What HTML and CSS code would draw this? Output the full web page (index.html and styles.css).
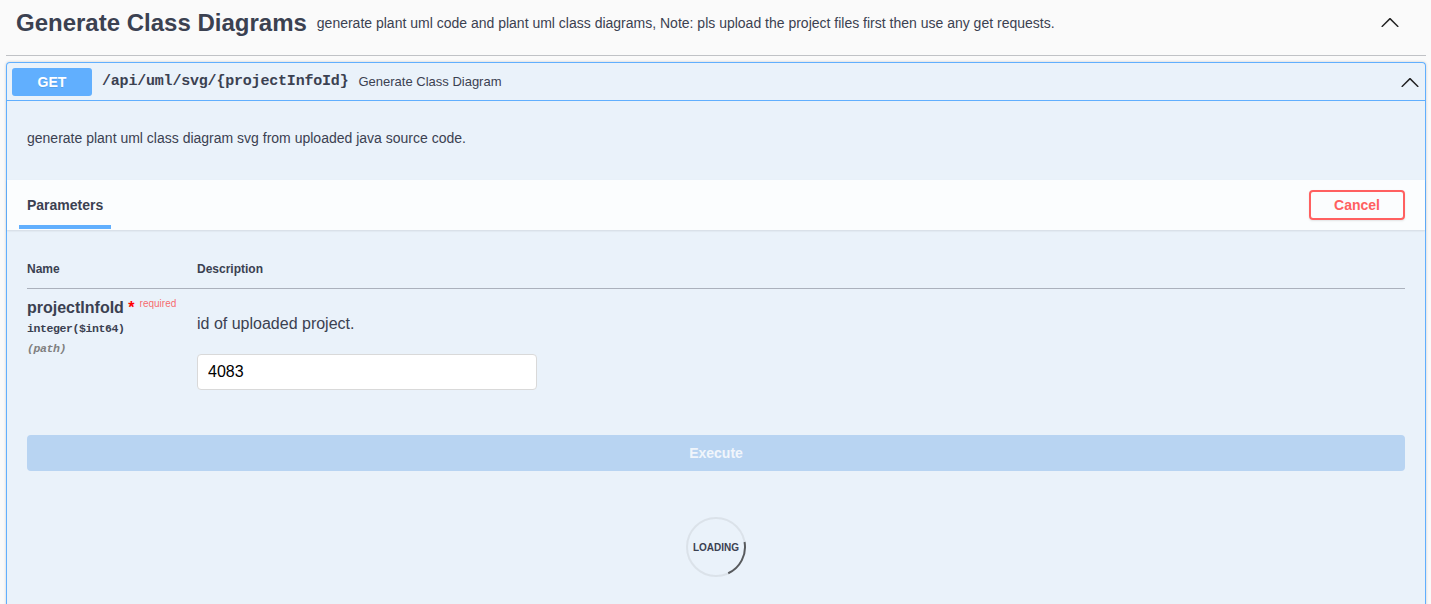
FILE: index.html
```html
<!DOCTYPE html>
<html lang="en">
<head>
<meta charset="utf-8">
<title>Generate Class Diagrams</title>
<link rel="stylesheet" href="styles.css">
</head>
<body>
<div class="wrapper">
  <section class="tag-section">
    <div class="tag-header">
      <h3 class="tag-title">Generate Class Diagrams</h3>
      <small class="tag-desc">generate plant uml code and plant uml class diagrams, Note: pls upload the project files first then use any get requests.</small>
      <button class="expand" aria-label="Collapse operation">
        <svg width="20" height="20" viewBox="0 0 20 20"><path d="M17.418 14.908c.272.268.709.268.979 0s.27-.701 0-.969l-7.908-7.830c-.27-.268-.707-.268-.979 0l-7.908 7.830c-.27.268-.27.701 0 .969.271.268.709.268.979 0L10 7.767l7.418 7.141z"/></svg>
      </button>
    </div>

    <div class="opblock">
      <div class="summary">
        <span class="method">GET</span>
        <span class="path">/api/uml/svg/{projectInfoId}</span>
        <span class="summary-desc">Generate Class Diagram</span>
        <svg class="arrow" width="20" height="20" viewBox="0 0 20 20"><path d="M17.418 14.908c.272.268.709.268.979 0s.27-.701 0-.969l-7.908-7.830c-.27-.268-.707-.268-.979 0l-7.908 7.830c-.27.268-.27.701 0 .969.271.268.709.268.979 0L10 7.767l7.418 7.141z"/></svg>
      </div>

      <div class="op-body">
        <div class="op-desc">
          <p>generate plant uml class diagram svg from uploaded java source code.</p>
        </div>

        <div class="section-header">
          <div class="tab-item"><h4>Parameters</h4></div>
          <button class="btn-cancel">Cancel</button>
        </div>

        <div class="table-container">
          <table class="params">
            <thead>
              <tr><th class="col-name">Name</th><th class="col-desc">Description</th></tr>
            </thead>
            <tbody>
              <tr>
                <td class="col-name">
                  <div class="param-name">projectInfoId<span class="req">&nbsp;*</span><span class="req-label">required</span></div>
                  <div class="param-type">integer($int64)</div>
                  <div class="param-in">(path)</div>
                </td>
                <td class="col-desc">
                  <p class="param-desc">id of uploaded project.</p>
                  <input class="param-input" type="text" value="4083">
                </td>
              </tr>
            </tbody>
          </table>
        </div>

        <div class="execute-wrapper">
          <button class="btn-execute" disabled>Execute</button>
        </div>

        <div class="loading-container">
          <div class="loading">
            <svg width="62" height="62" viewBox="0 0 62 62">
              <circle cx="31" cy="31" r="29" fill="none" stroke="rgba(85,85,85,0.1)" stroke-width="2"/>
              <path d="M59.56 25.96A29 29 0 0 1 43.26 57.28" fill="none" stroke="rgba(0,0,0,0.6)" stroke-width="2"/>
            </svg>
            <span class="loading-text">Loading</span>
          </div>
        </div>
      </div>
    </div>
  </section>
</div>
</body>
</html>
```

FILE: styles.css
```css
html, body {
  margin: 0;
  padding: 0;
}

body {
  background: #fafafa;
  color: #3b4151;
  font-family: "Liberation Sans", Arial, sans-serif;
}

.wrapper {
  padding: 0 5px 0 6px;
}

/* ---------- tag header ---------- */
.tag-header {
  display: flex;
  align-items: center;
  padding: 9px 20px 18px 10px;
  border-bottom: 1px solid rgba(59, 65, 81, 0.3);
}

.tag-title {
  margin: 0;
  font-size: 24px;
  line-height: 28px;
  font-weight: 700;
  color: #3b4151;
  white-space: nowrap;
}

.tag-desc {
  flex: 1;
  padding: 0 10px;
  font-size: 14px;
  line-height: 16px;
  color: #3b4151;
}

.expand {
  align-self: flex-start;
  margin: 3px 6px 0 0;
  padding: 0;
  border: none;
  background: none;
  width: 20px;
  height: 20px;
  display: flex;
}

.expand svg,
.arrow {
  fill: #222;
}

/* ---------- opblock ---------- */
.opblock {
  margin-top: 6px;
  border: 1px solid #61affe;
  border-bottom: none;
  border-radius: 4px 4px 0 0;
  background: rgba(97, 175, 254, 0.1);
  box-shadow: 0 0 3px rgba(0, 0, 0, 0.19);
}

.summary {
  display: flex;
  align-items: center;
  height: 37px;
  padding: 0 5px 0 5px;
  border-bottom: 1px solid #61affe;
}

.method {
  box-sizing: border-box;
  width: 80px;
  height: 28px;
  line-height: 28px;
  text-align: center;
  background: #61affe;
  color: #fff;
  font-size: 14px;
  font-weight: 700;
  border-radius: 3px;
  text-shadow: 0 1px 0 rgba(0, 0, 0, 0.1);
}

.path {
  margin-left: 10px;
  font-family: "Liberation Mono", "DejaVu Sans Mono", monospace;
  font-size: 15px;
  letter-spacing: -0.2px;
  font-weight: 700;
  color: #3b4151;
}

.summary-desc {
  flex: 1;
  padding-left: 10px;
  font-size: 13px;
  color: #3b4151;
}

.arrow {
  flex: none;
}

/* ---------- body ---------- */
.op-desc {
  padding: 29px 20px 33px;
}

.op-desc p {
  margin: 0;
  font-size: 14px;
  line-height: 17px;
}

.section-header {
  display: flex;
  align-items: center;
  justify-content: space-between;
  min-height: 50px;
  box-sizing: border-box;
  padding: 0 20px;
  background: rgba(255, 255, 255, 0.8);
  box-shadow: 0 1px 2px rgba(0, 0, 0, 0.1);
}

.tab-item {
  position: relative;
}

.tab-item h4 {
  margin: 0;
  font-size: 14px;
  line-height: 17px;
  font-weight: 700;
  color: #3b4151;
}

.tab-item::after {
  content: "";
  position: absolute;
  left: -10%;
  width: 120%;
  bottom: -15px;
  height: 4px;
  background: #61affe;
}

.btn-cancel {
  box-sizing: border-box;
  width: 96px;
  height: 30px;
  padding: 0;
  margin-right: 0;
  border: 2px solid #ff6060;
  border-radius: 4px;
  background: transparent;
  color: #ff6060;
  font-family: "Liberation Sans", Arial, sans-serif;
  font-size: 14px;
  font-weight: 700;
  box-shadow: 0 1px 2px rgba(0, 0, 0, 0.1);
}

/* ---------- parameters table ---------- */
.table-container {
  padding: 20px;
}

.params {
  width: 100%;
  border-collapse: collapse;
}

.params th {
  padding: 12px 0;
  text-align: left;
  font-size: 12px;
  line-height: 14px;
  font-weight: 700;
  color: #3b4151;
  border-bottom: 1px solid rgba(59, 65, 81, 0.2);
}

.params th.col-name,
.params td.col-name {
  width: 170px;
}

.params td {
  vertical-align: top;
  padding: 10px 0 0;
}

.param-name {
  font-size: 16px;
  line-height: 18px;
  font-weight: 700;
  color: #3b4151;
  white-space: nowrap;
}

.req {
  color: red;
}

.req-label {
  position: relative;
  top: -6px;
  padding: 5px;
  font-size: 10px;
  font-weight: 400;
  color: rgba(255, 0, 0, 0.6);
}

.param-type {
  margin-top: 3px;
  font-family: "Liberation Mono", "DejaVu Sans Mono", monospace;
  font-size: 11.5px;
  letter-spacing: -0.4px;
  line-height: 14px;
  font-weight: 700;
  color: #3b4151;
}

.param-in {
  margin-top: 6px;
  font-family: "Liberation Mono", "DejaVu Sans Mono", monospace;
  font-size: 11.5px;
  letter-spacing: -0.4px;
  line-height: 14px;
  font-style: italic;
  font-weight: 700;
  color: #808080;
}

.param-desc {
  margin: 16px 0 21px;
  font-size: 16px;
  line-height: 18px;
  color: #3b4151;
}

.param-input {
  display: block;
  box-sizing: border-box;
  width: 340px;
  height: 36px;
  margin: 0 0 5px;
  padding: 8px 10px;
  border: 1px solid #d9d9d9;
  border-radius: 4px;
  background: #fff;
  font-family: "Liberation Sans", Arial, sans-serif;
  font-size: 16px;
  color: #000;
}

/* ---------- execute ---------- */
.execute-wrapper {
  padding: 20px;
}

.btn-execute {
  display: block;
  width: 100%;
  height: 36px;
  padding: 0;
  border: 2px solid #4990e2;
  border-radius: 4px;
  background: #4990e2;
  color: #fff;
  font-family: "Liberation Sans", Arial, sans-serif;
  font-size: 14px;
  font-weight: 700;
  opacity: 0.3;
}

/* ---------- loading ---------- */
.loading-container {
  display: flex;
  justify-content: center;
  padding: 25px 0 60px;
}

.loading {
  display: grid;
  place-items: center;
  width: 62px;
  height: 62px;
}

.loading > * {
  grid-area: 1 / 1;
}

.loading svg {
  display: block;
}

.loading-text {
  font-size: 10px;
  font-weight: 700;
  text-transform: uppercase;
  color: #3b4151;
}
```
